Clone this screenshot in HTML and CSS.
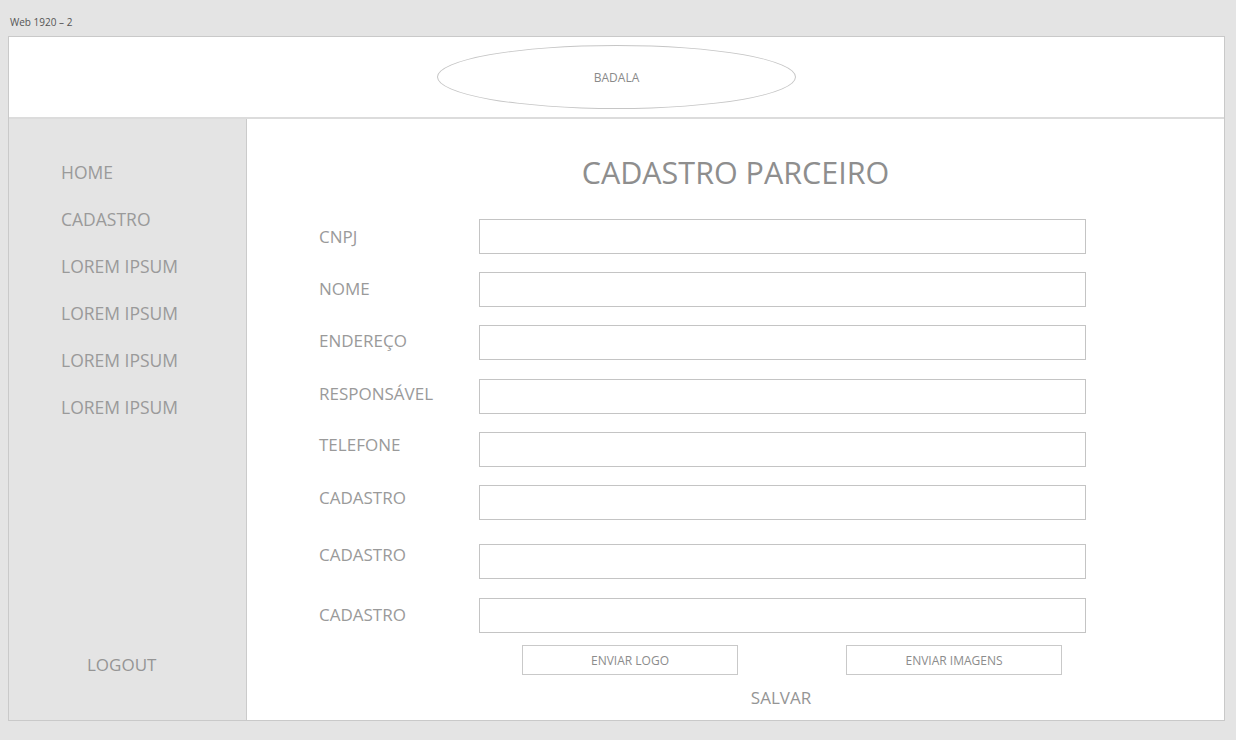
FILE: index.html
```html
<!DOCTYPE html>
<html lang="pt">
<head>
<meta charset="utf-8">
<title>Web 1920 – 2</title>
<link rel="stylesheet" href="styles.css">
</head>
<body>
<div class="frame-label">Web 1920 – 2</div>
<div class="artboard">
  <header class="topbar">
    <div class="logo">BADALA</div>
  </header>
  <div class="body">
    <aside class="sidebar">
      <nav class="nav">
        <a class="nav-item">HOME</a>
        <a class="nav-item">CADASTRO</a>
        <a class="nav-item">LOREM IPSUM</a>
        <a class="nav-item">LOREM IPSUM</a>
        <a class="nav-item">LOREM IPSUM</a>
        <a class="nav-item">LOREM IPSUM</a>
      </nav>
      <a class="logout">LOGOUT</a>
    </aside>
    <main class="main">
      <h1 class="title">CADASTRO PARCEIRO</h1>
      <form class="form">
        <div class="row"><label class="label lift-0">CNPJ</label><div class="input"></div></div>
        <div class="row"><label class="label lift-2">NOME</label><div class="input"></div></div>
        <div class="row"><label class="label lift-4">ENDEREÇO</label><div class="input"></div></div>
        <div class="row gap19"><label class="label lift-6">RESPONSÁVEL</label><div class="input"></div></div>
        <div class="row"><label class="label lift-10">TELEFONE</label><div class="input"></div></div>
        <div class="row"><label class="label lift-10">CADASTRO</label><div class="input"></div></div>
        <div class="row gap24"><label class="label lift-14">CADASTRO</label><div class="input"></div></div>
        <div class="row gap19"><label class="label lift-2">CADASTRO</label><div class="input"></div></div>
        <div class="buttons">
          <div class="btn">ENVIAR LOGO</div>
          <div class="btn">ENVIAR IMAGENS</div>
        </div>
        <div class="save">SALVAR</div>
      </form>
    </main>
  </div>
</div>
</body>
</html>
```
FILE: styles.css
```css
* { box-sizing: border-box; }
html, body { margin: 0; padding: 0; }
body {
  background: #e4e4e4;
  font-family: "Open Sans", "Noto Sans", sans-serif;
  width: 1236px;
  height: 740px;
  overflow: hidden;
}
.frame-label {
  font-size: 10px;
  color: #555;
  padding: 16px 0 0 10px;
  height: 36px;
  line-height: 12px;
}
.artboard {
  margin-left: 8px;
  width: 1217px;
  height: 685px;
  border: 1px solid #c9c9c9;
  background: #fff;
  display: flex;
  flex-direction: column;
}
.topbar {
  height: 82px;
  border-bottom: 2px solid #dcdcdc;
  display: flex;
  justify-content: center;
  padding-top: 8px;
}
.logo {
  width: 359px;
  height: 64px;
  border: 1px solid #c6c6c6;
  border-radius: 50%;
  display: flex;
  align-items: center;
  justify-content: center;
  font-size: 12px;
  color: #8a8a8a;
}
.body {
  flex: 1;
  display: flex;
}
.sidebar {
  width: 238px;
  background: #e4e4e4;
  border-right: 1px solid #cbcbcb;
  display: flex;
  flex-direction: column;
  justify-content: space-between;
}
.nav {
  display: flex;
  flex-direction: column;
  padding: 30px 0 0 52px;
}
.nav-item {
  font-size: 17.5px;
  line-height: 47px;
  height: 47px;
  color: #9a9a9a;
}
.logout {
  font-size: 17px;
  color: #959595;
  line-height: 24px;
  padding: 0 0 43px 78px;
}
.main {
  flex: 1;
  display: flex;
  flex-direction: column;
}
.title {
  margin: 33px 0 0 0;
  font-weight: 400;
  font-size: 30.5px;
  line-height: 40px;
  color: #8e8e8e;
  text-align: center;
}
.form {
  display: flex;
  flex-direction: column;
  padding-left: 72px;
  margin-top: 27px;
}
.row {
  display: flex;
  align-items: center;
  height: 35px;
  margin-top: 18px;
}
.row:first-child { margin-top: 0; }
.row.gap19 { margin-top: 19px; }
.row.gap24 { margin-top: 24px; }
.label {
  width: 160px;
  font-size: 17px;
  color: #9a9a9a;
}
.lift-0 { padding-bottom: 0; }
.lift-2 { padding-bottom: 2px; }
.lift-4 { padding-bottom: 4px; }
.lift-6 { padding-bottom: 6px; }
.lift-10 { padding-bottom: 10px; }
.lift-14 { padding-bottom: 14px; }
.input {
  width: 607px;
  height: 35px;
  border: 1px solid #c4c4c4;
  background: #fff;
}
.buttons {
  display: flex;
  gap: 108px;
  margin: 12px 0 0 203px;
}
.btn {
  width: 216px;
  height: 30px;
  border: 1px solid #c9c9c9;
  font-size: 12px;
  color: #8c8c8c;
  display: flex;
  align-items: center;
  justify-content: center;
}
.save {
  margin: 9px 0 0 359px;
  font-size: 17px;
  line-height: 28px;
  color: #959595;
  width: 206px;
  text-align: center;
}
```
